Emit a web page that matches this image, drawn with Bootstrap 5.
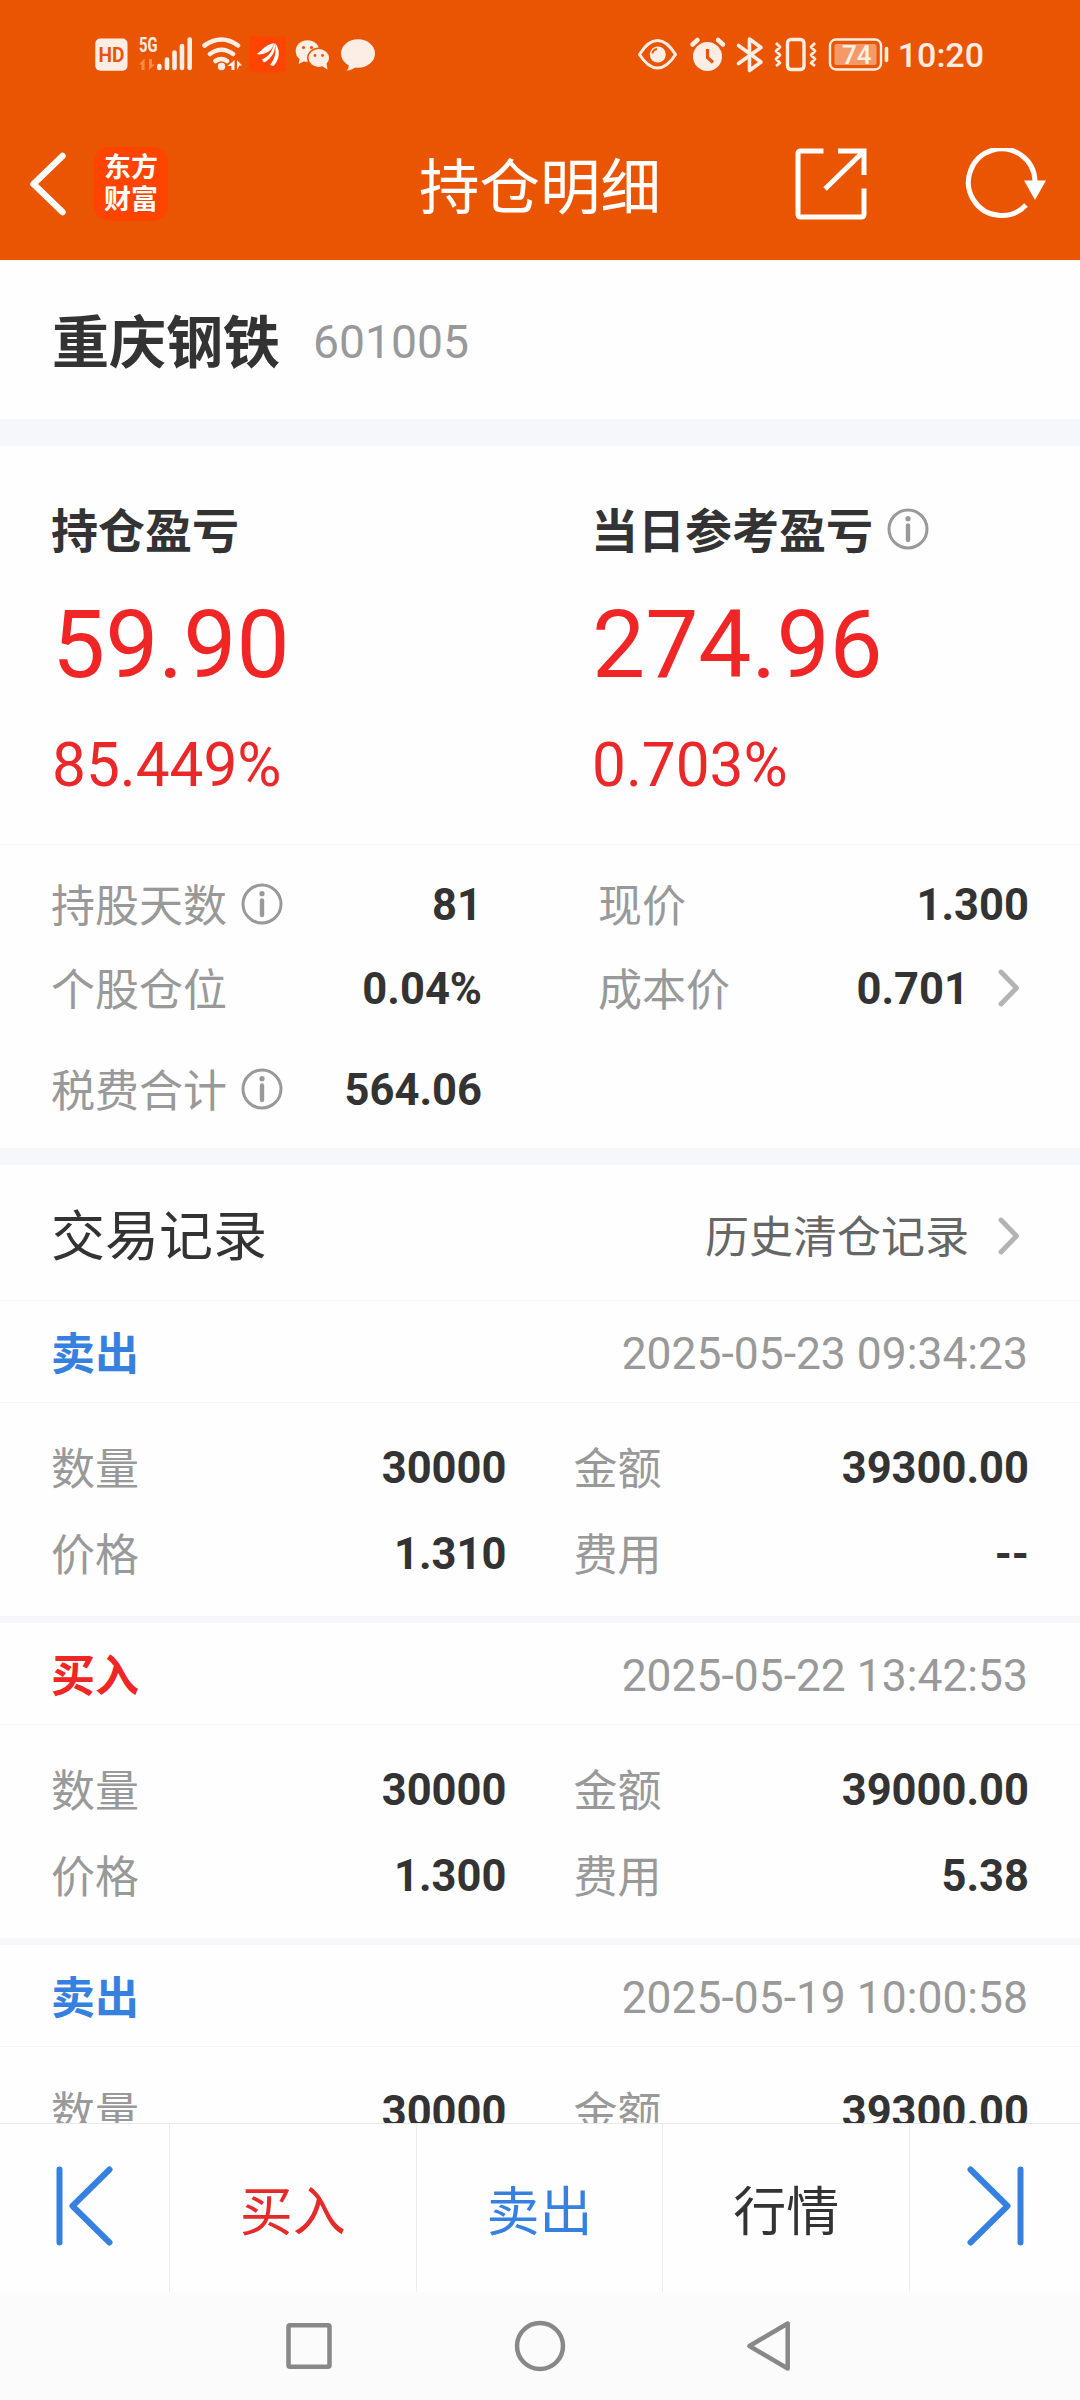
<!DOCTYPE html>
<html lang="zh-CN">
<head>
<meta charset="utf-8">
<meta name="viewport" content="width=device-width, initial-scale=1">
<title>持仓明细</title>
<link href="https://cdn.jsdelivr.net/npm/bootstrap@5.3.0/dist/css/bootstrap.min.css" rel="stylesheet">
<style>
  :root { --brand:#ea5504; --ink:#333; --mute:#999; --up:#f02626; --down:#3681e0; --gap:#f6f7fa; }
  body { font-family: Roboto, "Noto Sans CJK SC", sans-serif; color: var(--ink); background:#fefefe; font-size:44px; line-height:60px; height:2400px; overflow:hidden; }
  svg { display:block; flex:none; }
  .c-up { color:var(--up); } .c-down { color:var(--down); } .c-mute { color:var(--mute); } .c-sub { color:#666; }
  .bg-brand { background:var(--brand); }
  .statusbar { height:108px; padding:0 96px 0 95px; color:#fdeee5; }
  .clock { font-size:34px; font-weight:500; line-height:40px; padding-top:2px; margin-left:9px; }
  .titlebar { height:152px; padding:0 34px 0 28px; }
  .titlebar .heading { font-size:60.500px; line-height:80px; padding-top:10px; }
  .logo { width:74px; height:74px; border-radius:15px; background:#ff4400; font-size:27px; line-height:32px; font-weight:700; margin-left:26px; }
  .refresh { margin-left:97px; }
  .stock { height:159px; padding:8px 52px 0; }
  .stock .name { font-size:57px; font-weight:700; }
  .stock .code { font-size:46.300px; margin:0 0 3px 33px; }
  .band { background:var(--gap); flex:none; }
  .pl { height:399px; padding:56px 0 0 52px; border-bottom:1px solid #f5f5f6; }
  .pl .cap { font-size:47px; font-weight:700; height:60px; margin-left:-1px; }
  .pl .big { font-size:94.600px; line-height:166px; }
  .pl .pct { font-size:60.300px; line-height:76px; color:#eb2829; }
  .info { margin:0 0 7px 14px; }
  .stats { padding:19px 52px 0; height:303px; column-gap:118px; }
  .stats .line { height:84px; }
  .stats .last { height:118px; }
  .line .c-mute { padding-top:2px; margin-left:-1px; }
  .stats .info { margin-bottom:4px; }
  .num { font-weight:700; }
  .line .num { font-size:43.500px; margin-right:-1px; }
  .half { flex:1 1 0; min-width:0; }
  .chev { margin:0 8px 5px 29px; }
  .line .chev { margin-left:30px; }
  .sect { height:136px; padding:11px 52px 0; border-bottom:1px solid #f5f5f6; }
  .sect .t { font-size:54px; margin-left:-1px; }
  .rec-h { height:102px; padding:5px 52px 0; border-bottom:1px solid #f5f5f6; }
  .rec-h .num { margin-left:-1px; padding-top:2px; }
  .rec-h .c-mute { font-size:44.400px; }
  .rec-b { height:213px; padding:23px 52px 0; column-gap:69px; }
  .rec-b .line { height:86px; }
  .tabs { height:169px; border-top:1px solid #e8e8e8; background:#fefefe; }
  .tabs > div { border-right:1px solid #ececec; font-size:53px; }
  .tabs > div:last-child { border-right:0; }
  .tabs .edge { width:170px; padding-bottom:5px; }
  .tabs .mid { width:247px; padding-top:9px; }
  .sysnav { height:108px; background:#fbfbfb; }
</style>
</head>
<body class="d-flex flex-column m-0">
<svg width="0" height="0" class="position-absolute">
  <defs>
    <symbol id="i-info" viewBox="0 0 42 42"><circle cx="21" cy="21" r="19" fill="none" stroke="#999" stroke-width="3"/><circle cx="21" cy="10.7" r="2.6" fill="#999"/><path d="M21 17.5V32" stroke="#999" stroke-width="4.4" stroke-linecap="round"/></symbol>
    <symbol id="i-chev" viewBox="0 0 22 38"><path d="M3 3l15.500 16L3 35" fill="none" stroke="#b3b3b3" stroke-width="4.800" stroke-linecap="round" stroke-linejoin="round"/></symbol>
  </defs>
</svg>

<header class="bg-brand text-white flex-shrink-0">
  <div class="statusbar d-flex align-items-center justify-content-between">
    <svg width="282" height="40" viewBox="95 34 282 40" fill="#fdeee5">
      <rect x="95.300" y="38.500" width="32.200" height="32.200" rx="5"/>
      <text x="98.500" y="62" font-size="21" font-weight="700" fill="#ea5504" textLength="26" lengthAdjust="spacingAndGlyphs">HD</text>
      <text x="139" y="52" font-size="20.500" font-weight="700" textLength="18.500" lengthAdjust="spacingAndGlyphs">5G</text>
      <path d="M144.500 58.500V70h-3v-5.500H139zM149 70V59h3v5.500h3z" fill="#ff8a4a"/>
      <g stroke="#fdeee5" stroke-width="4.600" stroke-linecap="round" fill="none">
        <path d="M159.300 66v2M167 59.500V68M174.500 52.500V68M182 46V68M189.700 39.500V68"/>
        <path d="M204.500 45.500q17-12 33.500 0M210 54q11.500-8.500 23 0M215.500 61q6-4 11.500 0"/>
      </g>
      <circle cx="221.500" cy="66.500" r="3.700"/>
      <path d="M234.500 60v10h-3v-4h-4zM237 70V60l5 5.500h-2.500z"/>
      <rect x="249.500" y="36.500" width="36" height="36" fill="#ff4400"/>
      <path d="M256.500 54c5-2.500 8-9 17.500-11-1 6-6 11-14.500 11.500zM262 59.500c7-3 10-8 12.500-16.500 2 7-2 15-10.500 19.500zM270 65c5-6 6.500-13 5-22 6 7 4.500 17-1.500 23z" fill="#fff"/>
      <ellipse cx="307.500" cy="51" rx="11.800" ry="10.800"/><path d="M300 58l-1.500 6 7-3.500z"/>
      <ellipse cx="318.800" cy="58" rx="11" ry="9.800" stroke="#ea5504" stroke-width="1.500"/><path d="M322 66l5.500 3.500-1-6z"/>
      <g fill="#ea5504"><circle cx="303.500" cy="47.500" r="1.600"/><circle cx="311.500" cy="47.500" r="1.600"/><circle cx="315" cy="55.500" r="1.400"/><circle cx="322.500" cy="55.500" r="1.400"/></g>
      <ellipse cx="358" cy="53.500" rx="17" ry="14.300"/><path d="M348 62q2 6-1.500 8.500 6 0 10.500-5z"/>
    </svg>
    <div class="d-flex align-items-center">
      <svg width="252" height="40" viewBox="637 34 252 40" fill="none" stroke="#fdeee5" stroke-width="3">
        <path d="M639.500 54.500Q648 40.500 657.500 40.500T675.500 54.500Q667 68 657.500 68T639.500 54.500z" stroke-linejoin="round"/>
        <circle cx="657.800" cy="54.500" r="8" fill="#fdeee5" stroke="none"/><path d="M652.500 53.500q.5-4 4.500-4.500" stroke="#ea5504" stroke-width="2"/>
        <circle cx="707.500" cy="56.500" r="14.500" fill="#fdeee5" stroke="none"/>
        <path d="M692.500 44.500l5-4.500M723 44.500l-5-4.500" stroke-width="4.500" stroke-linecap="round"/>
        <path d="M707.500 49v8.500l5.500 5" stroke="#ea5504" stroke-width="3.200"/>
        <path d="M738.500 45.500L761 62l-11.500 8.500V39L761 47.500 738.500 63.500" stroke-width="3.600" stroke-linejoin="round" stroke-linecap="round"/>
        <rect x="787.500" y="39.500" width="16.500" height="30" rx="3.500" stroke-width="3.400"/>
        <path d="M776 43l4 4-4 4 4 4-4 4 4 4-4 3M815 43l-4 4 4 4-4 4 4 4-4 4 4 3" stroke-width="2.800" stroke-linejoin="round"/>
        <rect x="830" y="39.500" width="51" height="30" rx="6" stroke-width="2.400"/>
        <rect x="834.500" y="44" width="42" height="21" rx="2" fill="#f49a68" stroke="none"/>
        <path d="M886.500 48.500v12" stroke-width="3.600" stroke-linecap="round"/>
        <text x="842" y="63.700" font-size="26" font-weight="500" fill="#fdeee5" stroke="none">74</text>
      </svg>
      <span class="clock">10:20</span>
    </div>
  </div>
  <nav class="titlebar d-flex align-items-center justify-content-between position-relative">
    <div class="d-flex align-items-center">
      <svg width="40" height="66" viewBox="0 0 40 66"><path d="M34.500 5L5.500 33l29 28" fill="none" stroke="#fff" stroke-width="6.500" stroke-linejoin="round" stroke-linecap="round"/></svg>
      <div class="logo d-flex flex-column align-items-center justify-content-center text-white"><span>东方</span><span>财富</span></div>
    </div>
    <div class="heading position-absolute start-0 end-0 text-center">持仓明细</div>
    <div class="d-flex align-items-center">
      <svg width="72" height="72" viewBox="0 0 72 72" fill="none" stroke="#fff" stroke-width="5"><path d="M28.500 3H6Q3 3 3 6v60q0 3 3 3h60q3 0 3-3V40.500M43 3h26v24M68 4L30 41"/></svg>
      <svg class="refresh" width="82" height="72" viewBox="0 0 82 72"><path d="M62 57A33.300 33.300 0 1 1 71 33" fill="none" stroke="#fff" stroke-width="5"/><path d="M60 32.500h22L71 52z" fill="#fff"/></svg>
    </div>
  </nav>
</header>

<main class="flex-grow-1 overflow-hidden" style="min-height:0">
  <section class="stock d-flex align-items-center"><span class="name">重庆钢铁</span><span class="code c-mute">601005</span></section>
  <div class="band" style="height:27px"></div>
  <section class="pl d-flex">
    <div style="width:540px">
      <div class="cap">持仓盈亏</div><div class="big c-up">59.90</div><div class="pct">85.449%</div>
    </div>
    <div>
      <div class="cap d-flex align-items-center">当日参考盈亏<svg class="info" width="42" height="42"><use href="#i-info"/></svg></div>
      <div class="big c-up">274.96</div><div class="pct">0.703%</div>
    </div>
  </section>
  <section class="stats d-flex">
    <div class="half">
      <div class="line d-flex align-items-center"><span class="c-mute">持股天数</span><svg class="info" width="42" height="42"><use href="#i-info"/></svg><span class="num ms-auto">81</span></div>
      <div class="line d-flex align-items-center"><span class="c-mute">个股仓位</span><span class="num ms-auto">0.04%</span></div>
      <div class="line last d-flex align-items-center"><span class="c-mute">税费合计</span><svg class="info" width="42" height="42"><use href="#i-info"/></svg><span class="num ms-auto">564.06</span></div>
    </div>
    <div class="half">
      <div class="line d-flex align-items-center"><span class="c-mute">现价</span><span class="num ms-auto">1.300</span></div>
      <div class="line d-flex align-items-center"><span class="c-mute">成本价</span><span class="num ms-auto">0.701</span><svg class="chev" width="22" height="38"><use href="#i-chev"/></svg></div>
    </div>
  </section>
  <div class="band" style="height:17px"></div>
  <section class="sect d-flex align-items-center justify-content-between">
    <span class="t">交易记录</span>
    <span class="d-flex align-items-center c-sub">历史清仓记录<svg class="chev" width="22" height="38"><use href="#i-chev"/></svg></span>
  </section>

  <article>
    <div class="rec-h d-flex align-items-center justify-content-between"><span class="num c-down">卖出</span><span class="c-mute">2025-05-23 09:34:23</span></div>
    <div class="rec-b d-flex">
      <div class="half">
        <div class="line d-flex align-items-center justify-content-between"><span class="c-mute">数量</span><span class="num">30000</span></div>
        <div class="line d-flex align-items-center justify-content-between"><span class="c-mute">价格</span><span class="num">1.310</span></div>
      </div>
      <div class="half">
        <div class="line d-flex align-items-center justify-content-between"><span class="c-mute">金额</span><span class="num">39300.00</span></div>
        <div class="line d-flex align-items-center justify-content-between"><span class="c-mute">费用</span><span class="num">--</span></div>
      </div>
    </div>
    <div class="band" style="height:7px"></div>
  </article>
  <article>
    <div class="rec-h d-flex align-items-center justify-content-between"><span class="num c-up">买入</span><span class="c-mute">2025-05-22 13:42:53</span></div>
    <div class="rec-b d-flex">
      <div class="half">
        <div class="line d-flex align-items-center justify-content-between"><span class="c-mute">数量</span><span class="num">30000</span></div>
        <div class="line d-flex align-items-center justify-content-between"><span class="c-mute">价格</span><span class="num">1.300</span></div>
      </div>
      <div class="half">
        <div class="line d-flex align-items-center justify-content-between"><span class="c-mute">金额</span><span class="num">39000.00</span></div>
        <div class="line d-flex align-items-center justify-content-between"><span class="c-mute">费用</span><span class="num">5.38</span></div>
      </div>
    </div>
    <div class="band" style="height:7px"></div>
  </article>
  <article>
    <div class="rec-h d-flex align-items-center justify-content-between"><span class="num c-down">卖出</span><span class="c-mute">2025-05-19 10:00:58</span></div>
    <div class="rec-b d-flex">
      <div class="half">
        <div class="line d-flex align-items-center justify-content-between"><span class="c-mute">数量</span><span class="num">30000</span></div>
      </div>
      <div class="half">
        <div class="line d-flex align-items-center justify-content-between"><span class="c-mute">金额</span><span class="num">39300.00</span></div>
      </div>
    </div>
  </article>
</main>

<footer class="flex-shrink-0">
  <div class="tabs d-flex">
    <div class="edge d-flex align-items-center justify-content-center"><svg width="60" height="80" viewBox="0 0 60 80" fill="none" stroke="#3681e0" stroke-width="6" stroke-linecap="round" stroke-linejoin="round"><path d="M5.500 3.500v73M55.500 3.500L18.500 40l37 36.500"/></svg></div>
    <div class="mid d-flex align-items-center justify-content-center" style="color:#e62a2a">买入</div>
    <div class="mid d-flex align-items-center justify-content-center c-down">卖出</div>
    <div class="mid d-flex align-items-center justify-content-center">行情</div>
    <div class="edge d-flex align-items-center justify-content-center"><svg width="60" height="80" viewBox="0 0 60 80" fill="none" stroke="#3681e0" stroke-width="6" stroke-linecap="round" stroke-linejoin="round"><path d="M55.500 3.500v73M5.500 3.500L42.500 40l-37 36.500"/></svg></div>
  </div>
  <div class="sysnav d-flex align-items-center justify-content-center">
    <svg width="508" height="52" viewBox="286 2320 508 52" fill="none" stroke="#888" stroke-width="4.500" stroke-linejoin="round"><rect x="288.500" y="2325.300" width="41" height="41.500" rx="1.500"/><circle cx="540" cy="2346" r="23"/><path d="M787.700 2323.500v45L749.500 2346z"/></svg>
  </div>
</footer>
<script src="https://cdn.jsdelivr.net/npm/bootstrap@5.3.0/dist/js/bootstrap.bundle.min.js"></script>
</body>
</html>
